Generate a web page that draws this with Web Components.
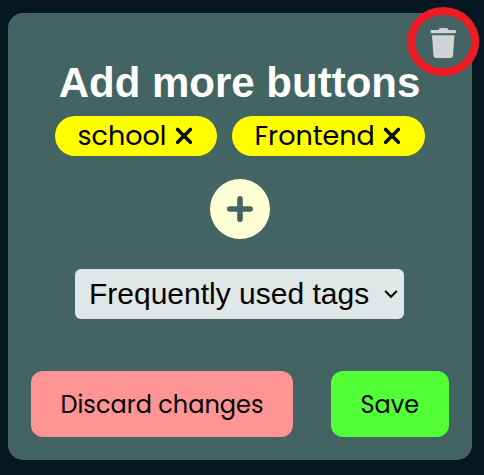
<!DOCTYPE html>
<html lang="en">
<head>
<meta charset="utf-8">
<title>Add more buttons</title>
<style>
html, body { margin: 0; height: 100%; background: #051720; overflow: hidden; }
</style>
</head>
<body>
<tag-dialog></tag-dialog>
<script>
const define = (name, html) => {
  const t = document.createElement('template');
  t.innerHTML = html;
  customElements.define(name, class extends HTMLElement {
    constructor() {
      super();
      this.attachShadow({ mode: 'open' }).append(t.content.cloneNode(true));
    }
  });
};

define('tag-chip', `
<style>
:host { display: flex; box-sizing: border-box; width: var(--w); height: 40px; padding-left: 23px; align-items: center; gap: 6px;
  border-radius: 20px; background: #ff0; color: #000; white-space: nowrap;
  font: 400 27px/40px Poppins, Inter, sans-serif; }
span { width: var(--tw); }
svg { display: block; flex: none; }
</style>
<span><slot></slot></span>
<svg width="20" height="20" viewBox="0 0 20 20"><path d="M3.600 3.400 16.400 16.200M16.400 3.400 3.600 16.200" stroke="#000" stroke-width="3.500" stroke-linecap="round"/></svg>`);

define('add-button', `
<style>
:host { display: block; width: 60px; height: 60px; border-radius: 50%; background: #ffffd6; }
svg { display: block; }
</style>
<svg width="60" height="60" viewBox="0 0 60 60"><path d="M30 19.8V40.2M19.8 30H40.2" stroke="#446464" stroke-width="5.6" stroke-linecap="round"/></svg>`);

define('tag-select', `
<style>
:host { display: flex; box-sizing: border-box; width: 329px; height: 50px; padding: 0 6px 0 14px; align-items: center; justify-content: space-between;
  border-radius: 6px; background: #e1e6e6; color: #000; font: 30px/50px "Liberation Sans", Arial, sans-serif; white-space: nowrap; }
svg { display: block; }
</style>
<span><slot></slot></span>
<svg width="14" height="10" viewBox="0 0 14 10"><path d="M1.2 2 7 7.8 12.8 2" fill="none" stroke="#000" stroke-width="2"/></svg>`);

define('action-button', `
<style>
:host { display: flex; box-sizing: border-box; width: var(--w); height: 66px; padding: 2px 0 0 29.500px; align-items: center;
  border-radius: 12px; background: var(--bg); color: #000; white-space: nowrap;
  font: 400 24px/64px Poppins, Inter, sans-serif; }
</style>
<span><slot></slot></span>`);

define('trash-button', `
<style>
:host { display: block; width: 74px; height: 72px; }
svg { display: block; }
</style>
<svg width="74" height="72" viewBox="0 0 74 72">
<ellipse cx="37.2" cy="35.5" rx="32" ry="30.6" fill="none" stroke="#ee1c24" stroke-width="8"/>
<g fill="#d0d4d5"><path d="M26 24H32.500Q33 22 35 22H40Q42 22 42.500 24H48.500Q50.200 24 50.200 25.500T48.500 27.300H26Q24.300 27.300 24.300 25.500T26 24Z"/>
<path d="M26 29.300H48.500L47 49.500Q46.800 52 44.300 52H30.200Q27.700 52 27.500 49.500Z"/></g>
</svg>`);

define('tag-dialog', `
<style>
:host { display: block; position: relative; box-sizing: border-box; width: 464px; height: 447px; margin: 13px 0 0 8px;
  background: #446464; border-radius: 15px; float: left; }
main { display: flex; flex-direction: column; align-items: center; box-sizing: border-box; width: 463px; padding-top: 46px; }
h1 { margin: 0 0 9px; color: #fff; font: bold 42px/48px "Liberation Sans", Arial, sans-serif; white-space: nowrap; }
.chips { display: flex; gap: 15px; margin-bottom: 23px; }
add-button { margin-bottom: 30px; }
tag-select { margin-bottom: 52px; }
footer { display: flex; gap: 38px; align-self: flex-start; padding-left: 23px; }
trash-button { position: absolute; top: -7px; right: -8px; }
</style>
<main>
<h1>Add more buttons</h1>
<div class="chips">
<tag-chip style="--w:162px;--tw:90px">school</tag-chip>
<tag-chip style="--w:193px;--tw:121px">Frontend</tag-chip>
</div>
<add-button></add-button>
<tag-select>Frequently used tags</tag-select>
<footer>
<action-button style="--w:262px;--bg:#ff9494">Discard changes</action-button>
<action-button style="--w:118px;--bg:#53ff37">Save</action-button>
</footer>
</main>
<trash-button></trash-button>`);
</script>
</body>
</html>
